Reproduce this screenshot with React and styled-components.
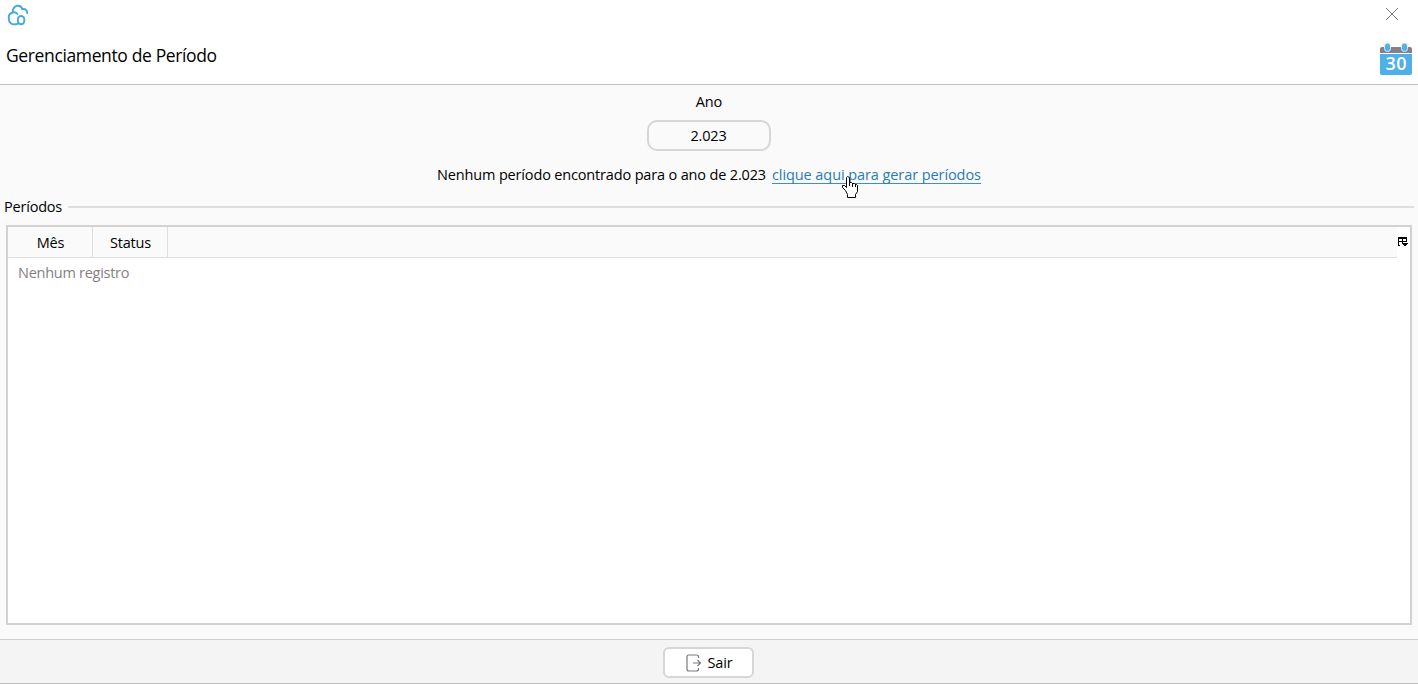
import React from "react";
import styled, { createGlobalStyle } from "styled-components";

const GlobalStyle = createGlobalStyle`
  * { box-sizing: border-box; }
  body { margin: 0; background: #fafafa; color: #000; overflow: hidden;
    font-family: "Open Sans", "Noto Sans", sans-serif; font-size: 14.5px; }
`;
const Window = styled.main`
  display: flex; flex-direction: column; width: 1418px; height: 684px; background: #fafafa;
`;
const Header = styled.header`
  height: 85px; background: #fff; border-bottom: 1px solid #bfbfbf;
`;
const TitleBar = styled.div`
  display: flex; justify-content: space-between; height: 30px; padding: 4px 19px 0 7px;
`;
const Heading = styled.div`
  display: flex; justify-content: space-between; height: 54px; padding: 12px 6px 0;
`;
const Text = styled.span`
  display: block; white-space: nowrap; line-height: 20px;
  font-size: 14.5px;
  letter-spacing: ${(p) => p.$spacing ?? -0.16}px;
  color: ${(p) => p.$color || "#000"};
`;
const Title = styled.h1`
  margin: 3px 0 0; font-size: 17.5px; line-height: 20px; font-weight: 400; letter-spacing: -0.37px;
`;
const Icon = styled.svg`
  display: block; flex: none;
`;
const Form = styled.section`
  display: flex; flex-direction: column; align-items: center; height: 112px; padding-top: 7px;
`;
const YearInput = styled.div`
  display: flex; align-items: center; justify-content: center;
  width: 124px; height: 31px; margin: 8px 1px 14px 0; border: 2px solid #d6d6d6; border-radius: 10px;
`;
const Message = styled.div`
  display: flex; gap: 6px; position: relative;
`;
const Link = styled.a`
  height: 19px; border-bottom: 1px solid #3d8fcb; color: #2a7ab5; cursor: pointer;
  white-space: nowrap; line-height: 20px; letter-spacing: -0.08px;
`;
const Pointer = styled(Icon)`
  position: absolute; left: 404px; top: 11px;
`;
const GroupTitle = styled.div`
  display: flex; align-items: center; gap: 6px; height: 20px; padding: 0 4px;
`;
const Rule = styled.div`
  flex: 1; height: 2px; background: #dedede;
`;
const Table = styled.section`
  position: relative; height: 400px; margin: 8px 6px 14px; border: 2px solid #d2d2d2; background: #fff;
`;
const TableHead = styled.div`
  display: flex; height: 31px; margin-right: 13px; background: #fafafa; border-bottom: 1px solid #dedede;
`;
const HeadCell = styled.div`
  display: flex; align-items: center; justify-content: center; padding: 2px 0 0 1px;
  width: ${(p) => p.$width}px; border-right: 1px solid #dedede;
`;
const EmptyRow = styled.div`
  padding: 5px 0 0 10px;
`;
const ColumnMenu = styled(Icon)`
  position: absolute; right: 2px; top: 9px;
`;
const Footer = styled.footer`
  display: flex; justify-content: center; height: 45px; padding-top: 7px;
  background: #f4f4f4; border-top: 1px solid #cfcfcf; border-bottom: 1px solid #bfbfbf;
`;
const ExitButton = styled.button`
  display: flex; align-items: center; justify-content: center; gap: 6px; width: 91px; height: 31px;
  margin-right: 1px; padding: 0 0 0 1px; border: 2px solid #d6d6d6; border-radius: 6px; background: #fff; font-family: inherit;
`;
const DayNumber = styled.text`
  font: 600 18px "Open Sans", sans-serif; letter-spacing: 0.5px; fill: #fff;
`;

const CloudLogo = () => (
  <Icon width="22" height="22" viewBox="0 0 22 22" fill="none" stroke="#45a9e2" strokeWidth="1.9" strokeLinecap="round">
    <path d="M11.6 19.2C10.7 20.2 9.5 20.4 8.2 20.2C5 21 1.8 18.6 1.8 15.3V13C1.8 10.7 3.4 9 5.8 8.5C7.6 8 9.2 8.5 10.3 10" />
    <path d="M6 8.2C5 5 7.6 2 10.6 1.8C13.3 1.6 14.7 3.1 15.2 5.1C18.2 4.4 20.4 6.1 20.2 9" />
    <rect x="10.9" y="12" width="6.4" height="8.2" rx="3.2" />
  </Icon>
);
const CloseIcon = () => (
  <Icon width="14" height="20" viewBox="0 0 14 20" stroke="#777" strokeWidth="1">
    <path d="M1 4L13 16M13 4L1 16" />
  </Icon>
);
const CalendarIcon = () => (
  <Icon width="32" height="34" viewBox="0 0 32 34">
    <path d="M0 11V7Q0 5 2 5H30Q32 5 32 7V11Z" fill="#858089" />
    <path d="M0 12H32V31Q32 33 30 33H2Q0 33 0 31Z" fill="#4fb0e8" />
    <rect x="4.5" y="1" width="6" height="8.5" rx="3" fill="#4fb0e8" stroke="#e4f0f7" />
    <rect x="21.5" y="1" width="6" height="8.5" rx="3" fill="#4fb0e8" stroke="#e4f0f7" />
    <DayNumber x="16.2" y="28" textAnchor="middle">30</DayNumber>
  </Icon>
);
const HandPointer = () => (
  <Pointer width="17" height="22" viewBox="0 0 17 22">
    <path d="M4.5 14.5L1.5 11.5V9.5H3.5L5.5 11.5V1.5L6.5.5L8.5 1.5V6.5H10.5L11.5 7.5H13.5L14.5 8.5H15.5L16.5 9.5V15.5L14.5 18.5V21.5H6.5V18.5Z" fill="#fff" stroke="#000" />
    <path d="M8.5 6V10M11.5 7V11M14.5 8V11" stroke="#000" />
  </Pointer>
);

export default function App() {
  return (
    <>
      <GlobalStyle />
      <Window>
        <Header>
          <TitleBar><CloudLogo /><CloseIcon /></TitleBar>
          <Heading><Title>Gerenciamento de Período</Title><CalendarIcon /></Heading>
        </Header>
        <Form>
          <Text>Ano</Text>
          <YearInput><Text>2.023</Text></YearInput>
          <Message>
            <Text>Nenhum período encontrado para o ano de 2.023</Text>
            <Link>clique aqui para gerar períodos</Link>
            <HandPointer />
          </Message>
        </Form>
        <GroupTitle><Text $spacing={-0.2}>Períodos</Text><Rule /></GroupTitle>
        <Table>
          <TableHead>
            <HeadCell $width={85}><Text>Mês</Text></HeadCell>
            <HeadCell $width={75}><Text $spacing={-0.2}>Status</Text></HeadCell>
          </TableHead>
          <EmptyRow><Text $color="#858085" $spacing={-0.27}>Nenhum registro</Text></EmptyRow>
          <ColumnMenu width="11" height="12" viewBox="0 0 11 12" fill="none" stroke="#000" shapeRendering="crispEdges">
            <path d="M3 9.5H1.5V1.5H9.5V6M1 2.5H10M1 5.5H10M5.5 2V7" />
            <path d="M4 7H11L7.5 10.5Z" fill="#000" stroke="none" />
          </ColumnMenu>
        </Table>
        <Footer>
          <ExitButton>
            <Icon width="16" height="18" viewBox="0 0 16 18" fill="none" stroke="#7d7880" strokeWidth="1.2">
              <path d="M12.5 4V3Q12.5 1 10.5 1H3Q1 1 1 3V15Q1 17 3 17H10.5Q12.5 17 12.5 15V14M7 9H14.5M11.5 6L14.5 9L11.5 12" />
            </Icon>
            <Text>Sair</Text>
          </ExitButton>
        </Footer>
      </Window>
    </>
  );
}
